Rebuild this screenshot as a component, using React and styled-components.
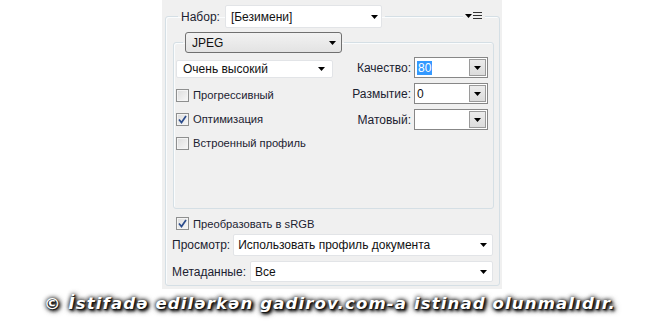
import React from "react";
import styled, { createGlobalStyle } from "styled-components";

const GlobalStyle = createGlobalStyle`
  body {
    margin: 0;
    background: #ffffff;
    font-family: "Liberation Sans", Arial, sans-serif;
    font-size: 12px;
    color: #1b2230;
  }
`;

const Page = styled.div`
  width: 660px;
  height: 330px;
  overflow: hidden;
`;

const Panel = styled.div`
  margin-left: 162px;
  width: 340px;
  height: 289px;
  box-sizing: border-box;
  padding: 5px 2px 0 3px;
  background: #f0f0f0;
`;

const Group = styled.fieldset`
  position: relative;
  margin: ${(p) => (p.$inner ? "4px 0 0 0" : "0")};
  padding: ${(p) => (p.$inner ? "0 5px 0 2px" : "0 5px 3px 7px")};
  border: 1px solid #d5dfe5;
  border-radius: 3px;
  box-shadow: inset 1px 1px 0 #fafcfd;
  min-width: 0;
`;

const Legend = styled.legend`
  display: flex;
  align-items: center;
  margin-left: ${(p) => p.$offset}px;
  padding: 0 ${(p) => p.$pad}px;
`;

const Label = styled.span`
  white-space: nowrap;
  margin-right: ${(p) => p.$gap || 0}px;
`;

const Arrow = () => (
  <svg width="7" height="4" viewBox="0 0 7 4">
    <path d="M0 0h7L3.5 4z" fill="#000" />
  </svg>
);

const Select = styled.div`
  display: flex;
  align-items: center;
  justify-content: space-between;
  box-sizing: border-box;
  width: ${(p) => (p.$width ? `${p.$width}px` : "auto")};
  flex: ${(p) => (p.$width ? "none" : "1")};
  height: ${(p) => p.$height}px;
  padding: 0 ${(p) => p.$right}px 0 ${(p) => p.$left}px;
  background: #ffffff;
  border: 1px solid #e2e4e7;
  border-radius: 2px;
  color: #111;
  white-space: nowrap;
`;

const FormatSelect = styled(Select)`
  background: linear-gradient(#f2f2f2, #e3e3e3);
  border: 1px solid #707070;
  border-radius: 3px;
`;

const MenuButton = styled.div`
  position: absolute;
  top: -17px;
  right: 14px;
  display: flex;
  align-items: center;
  gap: 1px;
  padding: 0 3px 0 2px;
  height: 9px;
  background: #f0f0f0;
`;

const MenuLines = styled.div`
  display: flex;
  flex-direction: column;
  gap: 2px;
  & > span {
    display: block;
    width: 9px;
    height: 1px;
    background: #333;
  }
`;

const Body = styled.div`
  display: flex;
  height: 155px;
`;

const LeftCol = styled.div`
  width: 157px;
  padding-top: 7px;
`;

const RightCol = styled.div`
  margin-left: auto;
  padding-top: 4px;
  display: flex;
  flex-direction: column;
  gap: 5px;
`;

const CheckRow = styled.label`
  display: flex;
  align-items: center;
  height: ${(p) => p.$h || 24}px;
  margin-top: ${(p) => p.$top || 0}px;
  padding-left: ${(p) => p.$left || 0}px;
  gap: 4px;
  font-size: 11.2px;
  white-space: nowrap;
`;

const Box = styled.span`
  display: flex;
  align-items: center;
  justify-content: center;
  box-sizing: border-box;
  width: 13px;
  height: 13px;
  border: 1px solid #8e8f8f;
  background: linear-gradient(135deg, #dcdcdc, #f8f8f8);
  box-shadow: inset 0 0 0 1px #f4f4f4;
`;

const Check = () => (
  <svg width="9" height="9" viewBox="0 0 9 9">
    <path d="M1 4.5l2.5 3L8 1" fill="none" stroke="#2b4c8c" strokeWidth="1.7" />
  </svg>
);

const FieldRow = styled.div`
  display: flex;
  align-items: center;
  justify-content: flex-end;
  gap: 3px;
`;

const SpinField = styled.div`
  display: flex;
  box-sizing: border-box;
  width: 74px;
  height: 21px;
  border: 1px solid #878787;
  background: #ffffff;
`;

const SpinText = styled.div`
  flex: 1;
  display: flex;
  align-items: center;
  padding-left: 2px;
  color: #111;
`;

const Selected = styled.span`
  background: #3399ff;
  color: #ffffff;
  padding: 0 1px;
`;

const SpinButton = styled.div`
  display: flex;
  align-items: center;
  justify-content: center;
  width: 17px;
  margin: 1px;
  box-sizing: border-box;
  border: 1px solid #9a9a9a;
  background: linear-gradient(#ececec, #dcdcdc);
`;

const ComboRow = styled.div`
  display: flex;
  align-items: center;
  height: ${(p) => p.$h}px;
  margin-top: ${(p) => p.$top}px;
  margin-right: 1px;
  margin-left: -1px;
`;

const Watermark = styled.div`
  margin-top: 5px;
  text-align: center;
  font-family: "DejaVu Sans", Verdana, sans-serif;
  font-weight: bold;
  font-style: italic;
  font-size: 16.5px;
  letter-spacing: 1.15px;
  color: #ffffff;
  text-shadow: 1px 1px 1px #111, 2px 2px 3px #222, 0 0 4px #222, 1px 1px 5px #333,
    2px 1px 6px #444;
`;

function Spin({ children }) {
  return (
    <SpinField>
      <SpinText>{children}</SpinText>
      <SpinButton>
        <Arrow />
      </SpinButton>
    </SpinField>
  );
}

function CheckItem({ checked, children, ...rest }) {
  return (
    <CheckRow {...rest}>
      <Box>{checked && <Check />}</Box>
      {children}
    </CheckRow>
  );
}

export default function App() {
  return (
    <Page>
      <GlobalStyle />
      <Panel>
        <Group>
          <Legend $offset={5} $pad={3}>
            <Label $gap={5}>Набор:</Label>
            <Select $width={157} $height={23} $left={5} $right={3}>
              [Безимени]
              <Arrow />
            </Select>
          </Legend>
          <MenuButton>
            <Arrow />
            <MenuLines>
              <span />
              <span />
              <span />
            </MenuLines>
          </MenuButton>

          <Group $inner>
            <Legend $offset={7} $pad={2}>
              <FormatSelect $width={157} $height={21} $left={6} $right={5}>
                JPEG
                <Arrow />
              </FormatSelect>
            </Legend>
            <Body>
              <LeftCol>
                <Select $width={157} $height={18} $left={6} $right={7}>
                  Очень высокий
                  <Arrow />
                </Select>
                <CheckItem $top={5}>Прогрессивный</CheckItem>
                <CheckItem checked>Оптимизация</CheckItem>
                <CheckItem>Встроенный профиль</CheckItem>
              </LeftCol>
              <RightCol>
                <FieldRow>
                  <Label>Качество:</Label>
                  <Spin>
                    <Selected>80</Selected>
                  </Spin>
                </FieldRow>
                <FieldRow>
                  <Label>Размытие:</Label>
                  <Spin>0</Spin>
                </FieldRow>
                <FieldRow>
                  <Label>Матовый:</Label>
                  <Spin />
                </FieldRow>
              </RightCol>
            </Body>
          </Group>

          <CheckItem checked $h={13} $top={8} $left={3}>
            Преобразовать в sRGB
          </CheckItem>
          <ComboRow $h={22} $top={4}>
            <Label $gap={3}>Просмотр:</Label>
            <Select $height={22} $left={4} $right={5}>
              Использовать профиль документа
              <Arrow />
            </Select>
          </ComboRow>
          <ComboRow $h={21} $top={5}>
            <Label $gap={4}>Метаданные:</Label>
            <Select $height={21} $left={4} $right={5}>
              Все
              <Arrow />
            </Select>
          </ComboRow>
        </Group>
      </Panel>
      <Watermark>© İstifadə edilərkən gadirov.com-a istinad olunmalıdır.</Watermark>
    </Page>
  );
}
